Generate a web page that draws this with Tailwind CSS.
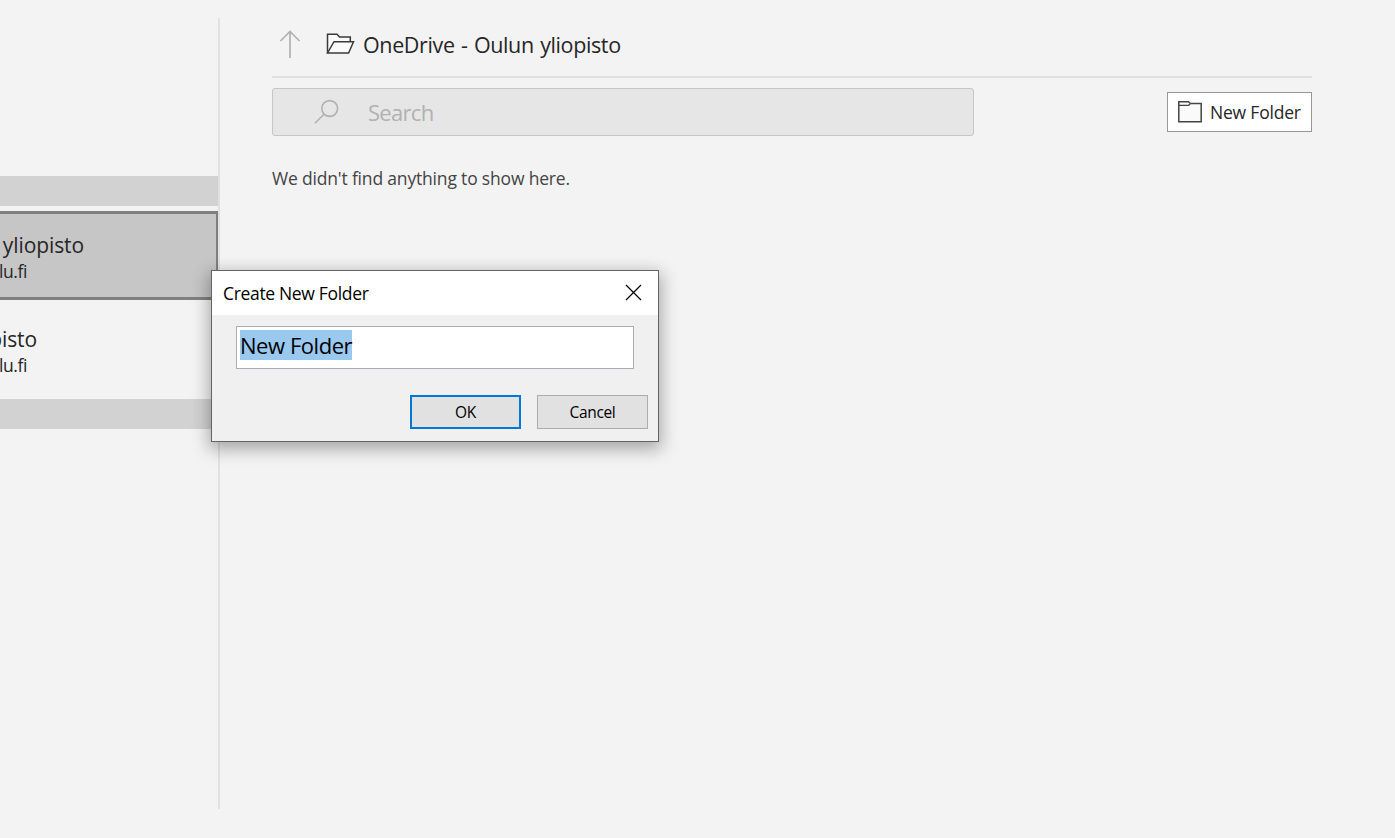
<!DOCTYPE html>
<html lang="en">
<head>
<meta charset="utf-8">
<title>Create New Folder</title>
<script src="https://cdn.jsdelivr.net/npm/@tailwindcss/browser@4"></script>
</head>
<body class="h-[838px] w-[1395px] overflow-hidden bg-[#f3f3f3] font-['Segoe_UI','Open_Sans','Noto_Sans',sans-serif] text-[#262626]">
<div class="relative flex h-full">
  <aside class="flex w-[218px] shrink-0 flex-col overflow-hidden pt-[176px] whitespace-nowrap">
    <div class="h-[30px] bg-[#d2d2d2]"></div>
    <div class="mt-[5px] h-[89px] border-y-3 border-r-2 border-[#808080] bg-[#c6c6c6] pt-[17px]">
      <div class="flex h-[28px] w-[84px] justify-end text-[21px] leading-[28px] tracking-[-0.1px]"><span>yliopisto</span></div>
      <div class="flex h-[24px] w-[27px] justify-end text-[17.500px] leading-[24px] tracking-[-0.4px]"><span>lu.fi</span></div>
    </div>
    <div class="h-[99px] pt-[25px]">
      <div class="flex h-[28px] w-[37px] justify-end text-[21px] leading-[28px] tracking-[-0.1px]"><span>pisto</span></div>
      <div class="flex h-[24px] w-[27px] justify-end text-[17.500px] leading-[24px] tracking-[-0.4px]"><span>lu.fi</span></div>
    </div>
    <div class="h-[30px] bg-[#d2d2d2]"></div>
  </aside>
  <div class="mt-[18px] h-[791px] w-[2px] shrink-0 bg-[#e1e1e1]"></div>
  <main class="ml-[52px] w-[1040px] shrink-0 whitespace-nowrap">
    <header class="flex h-[78px] border-b-2 border-[#e1e1e1]">
      <svg class="mt-[30px] ml-[7px] h-[29px] w-[22px]" viewBox="0 0 22 29" fill="none" stroke="#b1b1b1" stroke-width="1.7"><path d="M11 28V1.500M1.500 11L11 1.500L20.500 11"/></svg>
      <svg class="mt-[32px] ml-[25px] h-[22px] w-[29px]" viewBox="0 0 29 22" fill="#fafafa" stroke="#3b3b3b" stroke-width="1.500"><path d="M1.500 21V2.200H11L13.500 5H24.300V9.700"/><path d="M1.500 21L8 9.700H27.500L22.600 21Z"/></svg>
      <h1 class="mt-[30px] ml-[8px] text-[21.500px] leading-[30px] tracking-[-0.38px] [word-spacing:1.200px]"><span>OneDrive - Oulun yliopisto</span></h1>
    </header>
    <div class="mt-[10px] flex items-start justify-between">
      <div class="flex h-[48px] w-[702px] rounded-[3px] border border-[#c6c6c6] bg-[#e6e6e6] text-[#b1b1b1]">
        <svg class="mt-[9px] ml-[41px] h-[27px] w-[26px]" viewBox="0 0 26 27" fill="none" stroke="#b1b1b1" stroke-width="1.600"><circle cx="15.700" cy="10.500" r="7.900"/><path d="M10 16.200L.9 25.300"/></svg>
        <span class="mt-[8px] ml-[28px] text-[22px] leading-[30px] tracking-[-0.7px]">Search</span>
      </div>
      <button class="mt-[4px] flex h-[40px] w-[145px] border border-[#979797] bg-white">
        <svg class="mt-[8px] ml-[10px] h-[22px] w-[24px] shrink-0" viewBox="0 0 24 22" fill="#fafafa" stroke="#444" stroke-width="1.500"><path d="M.8 .8H10.500L12.200 2.500H23.200V20.800H.8Z"/><path d="M.8 4.300H10.700L12.300 2.600" stroke-width="1.300"/></svg>
        <span class="mt-[6px] ml-[8px] text-[17.500px] leading-[26px] tracking-[-0.2px]">New Folder</span>
      </button>
    </div>
    <p class="mt-[29px] text-[17.500px] leading-[26px] tracking-[-0.18px] text-[#444]"><span>We didn't find anything to show here.</span></p>
  </main>

  <section class="absolute top-[270px] left-[211px] flex h-[172px] w-[448px] flex-col border border-[#646464] bg-[#f0f0f0] whitespace-nowrap text-black shadow-[0_5px_16px_2px_rgba(0,0,0,0.32)]">
    <div class="flex h-[44px] justify-between bg-white">
      <h2 class="mt-[9px] ml-[11px] text-[17.500px] leading-[26px] tracking-[-0.33px]"><span>Create New Folder</span></h2>
      <svg class="mt-[13px] mr-[16px] h-[17px] w-[17px]" viewBox="0 0 17 17" fill="none" stroke="#000" stroke-width="1.200"><path d="M1 1L16 16M16 1L1 16"/></svg>
    </div>
    <div class="mt-[11px] ml-[24px] flex h-[43px] w-[398px] border border-[#abadb3] bg-white p-[3px]">
      <span class="h-[30px] w-[112px] bg-[#99c9ef] text-[22px] leading-[30px] tracking-[-0.45px]">New Folder</span>
    </div>
    <div class="mt-[26px] mr-[10px] flex justify-end gap-[16px] text-[15.500px] tracking-[-0.35px]">
      <button class="h-[34px] w-[111px] border-2 border-[#0078d7] bg-[#e1e1e1] pt-[2px]"><span>OK</span></button>
      <button class="h-[34px] w-[111px] border border-[#adadad] bg-[#e1e1e1] pt-[2px]"><span>Cancel</span></button>
    </div>
  </section>
</div>
</body>
</html>
